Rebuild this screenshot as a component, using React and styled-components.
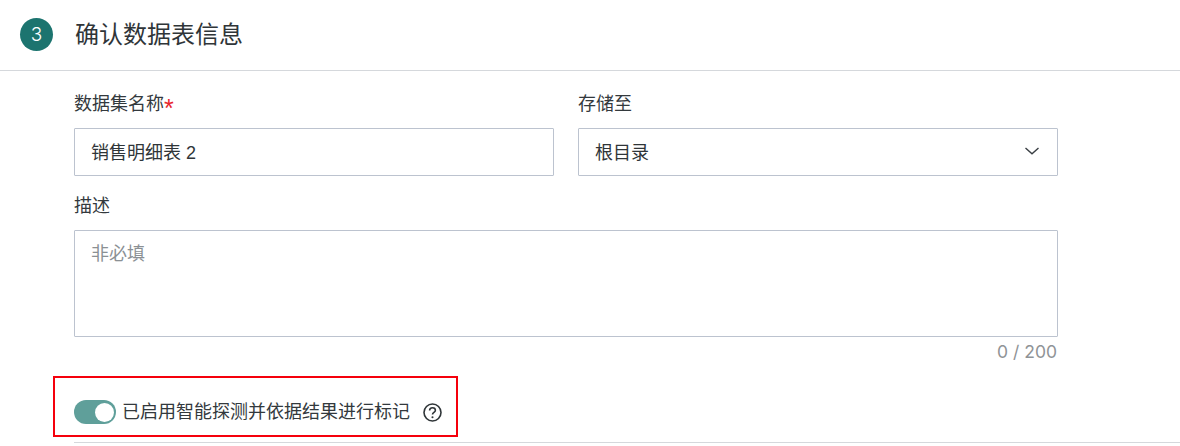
import React from "react";
import styled, { createGlobalStyle } from "styled-components";

const GlobalStyle = createGlobalStyle`
  html, body {
    margin: 0;
    background: #ffffff;
  }
  body {
    font-family: "Liberation Sans", "Noto Sans CJK SC", sans-serif;
    color: #333b3f;
  }
`;

const Page = styled.div`
  position: relative;
  width: 1180px;
  height: 446px;
  overflow: hidden;
  background: #ffffff;
`;

const Header = styled.header`
  display: flex;
  align-items: center;
  gap: 22px;
  height: 70px;
  padding-left: 20px;
  border-bottom: 1px solid #d5d8dc;
`;

const StepBadge = styled.div`
  display: flex;
  align-items: center;
  justify-content: center;
  width: 33px;
  height: 33px;
  margin-bottom: 1px;
  border-radius: 50%;
  background: #1c746f;
  color: #ffffff;
  font-family: Inter, "Liberation Sans", sans-serif;
  font-size: 19px;
  font-weight: 300;
`;

const Title = styled.h1`
  margin: 0;
  font-size: 24px;
  line-height: 32px;
  font-weight: 400;
  color: #2f3538;
`;

const Form = styled.div`
  width: 984px;
  margin-left: 74px;
  padding-top: 21px;
`;

const TopFields = styled.div`
  display: grid;
  grid-template-columns: 480px 480px;
  column-gap: 24px;
`;

const Label = styled.div`
  height: 36px;
  font-size: 18px;
  line-height: 24px;
  color: #33393d;
`;

const Required = styled.span`
  color: #e8262d;
  font-family: "Liberation Sans", sans-serif;
  font-size: 25px;
  line-height: 0;
  vertical-align: -7px;
`;

const InputBox = styled.div`
  display: flex;
  align-items: center;
  justify-content: space-between;
  box-sizing: border-box;
  height: 48px;
  padding: 0 18px 2px 16px;
  border: 1px solid #bcc3cf;
  border-radius: 1px;
  font-size: 18px;
  color: #2f3538;
`;

const DescLabel = styled(Label)`
  height: 37px;
  margin-top: 17px;
  padding-top: 1px;
  box-sizing: border-box;
`;

const TextArea = styled.div`
  box-sizing: border-box;
  height: 107px;
  padding: 11px 16px;
  border: 1px solid #bcc3cf;
  border-radius: 1px;
  font-size: 18px;
  line-height: 24px;
  color: #8b9094;
`;

const Counter = styled.div`
  margin-top: 4px;
  padding-right: 1px;
  text-align: right;
  font-family: Inter, "Liberation Sans", sans-serif;
  font-size: 17.5px;
  line-height: 22px;
  color: #8f9396;
`;

const SwitchRow = styled.div`
  display: flex;
  align-items: center;
  margin-top: 37px;
  height: 24px;
`;

const Track = styled.div`
  position: relative;
  flex: none;
  width: 42px;
  height: 24px;
  border-radius: 12px;
  background: #5f9f9a;
`;

const Knob = styled.div`
  position: absolute;
  top: 3px;
  right: 2px;
  width: 19px;
  height: 19px;
  border-radius: 50%;
  background: #ffffff;
`;

const SwitchText = styled.span`
  margin-left: 6px;
  font-size: 18px;
  line-height: 24px;
  color: #33393d;
`;

const HelpIcon = styled.svg`
  flex: none;
  margin-left: 13px;
`;

const BottomLine = styled.div`
  margin-top: 18px;
  margin-left: 74px;
  height: 1px;
  background: #d5d8dc;
`;

// annotation drawn on top of the screenshot
const Highlight = styled.div`
  position: absolute;
  left: 53px;
  top: 376px;
  width: 405px;
  height: 61px;
  box-sizing: border-box;
  border: 2px solid #f5000c;
  pointer-events: none;
`;

function Chevron() {
  return (
    <svg width="14" height="8" viewBox="0 0 14 8" fill="none">
      <path d="M0.5 1l6.5 5.8L13.5 1" stroke="#3a3f44" strokeWidth="1.4" />
    </svg>
  );
}

function Help() {
  return (
    <HelpIcon width="19" height="19" viewBox="0 0 19 19" fill="none">
      <circle cx="9.5" cy="9.5" r="8.5" stroke="#2f3538" strokeWidth="1.6" />
      <path
        d="M6.6 7.4c0-1.7 1.3-2.7 2.9-2.7s2.9 1 2.9 2.6c0 2.2-2.9 2.1-2.9 4.3"
        stroke="#2f3538"
        strokeWidth="1.6"
      />
      <circle cx="9.5" cy="14.2" r="1.05" fill="#2f3538" />
    </HelpIcon>
  );
}

export default function App() {
  return (
    <Page>
      <GlobalStyle />
      <Header>
        <StepBadge>3</StepBadge>
        <Title>确认数据表信息</Title>
      </Header>
      <Form>
        <TopFields>
          <div>
            <Label>
              数据集名称<Required>*</Required>
            </Label>
            <InputBox>销售明细表 2</InputBox>
          </div>
          <div>
            <Label>存储至</Label>
            <InputBox>
              根目录
              <Chevron />
            </InputBox>
          </div>
        </TopFields>
        <DescLabel>描述</DescLabel>
        <TextArea>非必填</TextArea>
        <Counter>0 / 200</Counter>
        <SwitchRow>
          <Track>
            <Knob />
          </Track>
          <SwitchText>已启用智能探测并依据结果进行标记</SwitchText>
          <Help />
        </SwitchRow>
      </Form>
      <BottomLine />
      <Highlight />
    </Page>
  );
}
